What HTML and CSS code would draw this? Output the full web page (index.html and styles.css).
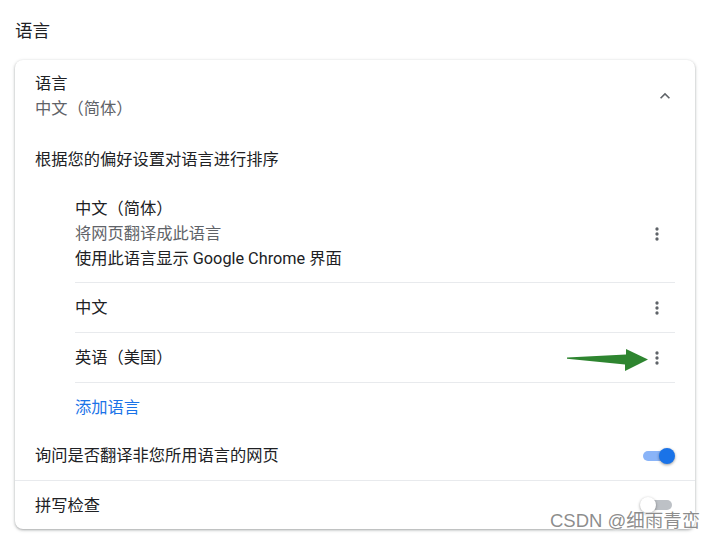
FILE: index.html
```html
<!DOCTYPE html>
<html lang="zh-CN">
<head>
<meta charset="utf-8">
<title>语言</title>
<link rel="stylesheet" href="styles.css">
</head>
<body>
<div class="page">
  <h2 class="section-title">语言</h2>
  <div class="card">
    <div class="header-row">
      <div class="text-col">
        <div class="primary">语言</div>
        <div class="secondary">中文（简体）</div>
      </div>
      <svg class="icon" viewBox="0 0 24 24" width="20" height="20"><path d="M12 8l-6 6 1.41 1.41L12 10.83l4.59 4.58L18 14z"/></svg>
    </div>
    <div class="hint">根据您的偏好设置对语言进行排序</div>
    <div class="lang-list">
      <div class="lang-row multi">
        <div class="text-col">
          <div class="primary">中文（简体）</div>
          <div class="secondary">将网页翻译成此语言</div>
          <div class="primary">使用此语言显示 Google Chrome 界面</div>
        </div>
        <svg class="icon" viewBox="0 0 24 24" width="20" height="20"><circle cx="12" cy="6" r="2"/><circle cx="12" cy="12" r="2"/><circle cx="12" cy="18" r="2"/></svg>
      </div>
      <div class="lang-row">
        <div class="primary">中文</div>
        <svg class="icon" viewBox="0 0 24 24" width="20" height="20"><circle cx="12" cy="6" r="2"/><circle cx="12" cy="12" r="2"/><circle cx="12" cy="18" r="2"/></svg>
      </div>
      <div class="lang-row">
        <div class="primary">英语（美国）</div>
        <svg class="icon" viewBox="0 0 24 24" width="20" height="20"><circle cx="12" cy="6" r="2"/><circle cx="12" cy="12" r="2"/><circle cx="12" cy="18" r="2"/></svg>
      </div>
      <div class="add-row"><span class="link">添加语言</span></div>
    </div>
    <div class="setting-row bordered">
      <div class="primary">询问是否翻译非您所用语言的网页</div>
      <div class="toggle on"><span class="track"></span><span class="knob"></span></div>
    </div>
    <div class="setting-row last">
      <div class="primary">拼写检查</div>
      <div class="toggle"><span class="track"></span><span class="knob"></span></div>
    </div>
  </div>
  <svg class="arrow" width="90" height="30" viewBox="560 345 90 30"><polygon points="567,357.6 626,354.6 626,349 648,359.6 625,371 625,364.6 567,358.8"/></svg>
  <div class="watermark">CSDN @细雨青峦</div>
</div>
</body>
</html>
```
FILE: styles.css
```css
html, body {
  margin: 0;
  padding: 0;
  background: #ffffff;
}
body {
  font-family: Roboto, "Noto Sans CJK SC", sans-serif;
  font-size: 16.25px;
  line-height: 25px;
  color: #202124;
}
.page {
  position: relative;
  width: 717px;
  height: 541px;
  padding: 19px 0 0 15px;
  box-sizing: border-box;
}
.section-title {
  margin: 0 0 16px 0;
  font-size: 17.5px;
  font-weight: 400;
  line-height: 25px;
  color: #202124;
}
.card {
  width: 680px;
  height: 469px;
  box-sizing: border-box;
  border-radius: 8px;
  background: #fff;
  box-shadow: 0 1px 2px 0 rgba(60,64,67,.3), 0 1px 3px 1px rgba(60,64,67,.15);
  display: flex;
  flex-direction: column;
}
.header-row {
  display: flex;
  align-items: center;
  justify-content: space-between;
  padding: 11px 20px 12px 20px;
}
.text-col {
  display: flex;
  flex-direction: column;
}
.primary {
  color: #202124;
}
.secondary {
  color: #5f6368;
}
.icon {
  fill: #5f6368;
  flex: none;
}
.hint {
  margin-top: 14px;
  padding: 0 20px;
}
.lang-list {
  margin: 13px 20px 0 60px;
  display: flex;
  flex-direction: column;
}
.lang-row {
  display: flex;
  align-items: center;
  justify-content: space-between;
  height: 50px;
  box-sizing: border-box;
  border-bottom: 1px solid #e8eaed;
  padding-right: 8px;
}
.lang-row.multi {
  height: auto;
  padding-top: 11px;
  padding-bottom: 11px;
}
.add-row {
  height: 48px;
  display: flex;
  align-items: center;
}
.link {
  color: #1a73e8;
}
.setting-row {
  display: flex;
  align-items: center;
  justify-content: space-between;
  height: 50px;
  box-sizing: border-box;
  padding: 0 20px;
}
.setting-row.bordered {
  border-bottom: 1px solid #e8eaed;
}
.setting-row.last {
  height: 48px;
}
.toggle {
  position: relative;
  width: 35px;
  height: 16px;
  flex: none;
}
.toggle .track {
  position: absolute;
  left: 3px;
  right: 3px;
  top: 3px;
  height: 10px;
  border-radius: 5px;
  background: #bdc1c6;
}
.toggle .knob {
  position: absolute;
  top: 0;
  left: 0;
  width: 16px;
  height: 16px;
  border-radius: 50%;
  background: #ffffff;
  box-shadow: 0 1px 3px rgba(0,0,0,.4);
}
.toggle.on .track {
  background: #8ab4f8;
}
.toggle.on .knob {
  left: auto;
  right: 0;
  background: #1a73e8;
}
.arrow {
  position: absolute;
  left: 560px;
  top: 345px;
  fill: #2e8530;
}
.watermark {
  position: absolute;
  left: 550px;
  top: 509px;
  font-family: "Liberation Sans", "Noto Sans CJK SC", sans-serif;
  font-size: 18.5px;
  line-height: 24px;
  color: rgba(120,120,120,0.85);
  text-shadow: 0 0 2px #fff, 0 0 2px #fff;
  white-space: nowrap;
}
```
